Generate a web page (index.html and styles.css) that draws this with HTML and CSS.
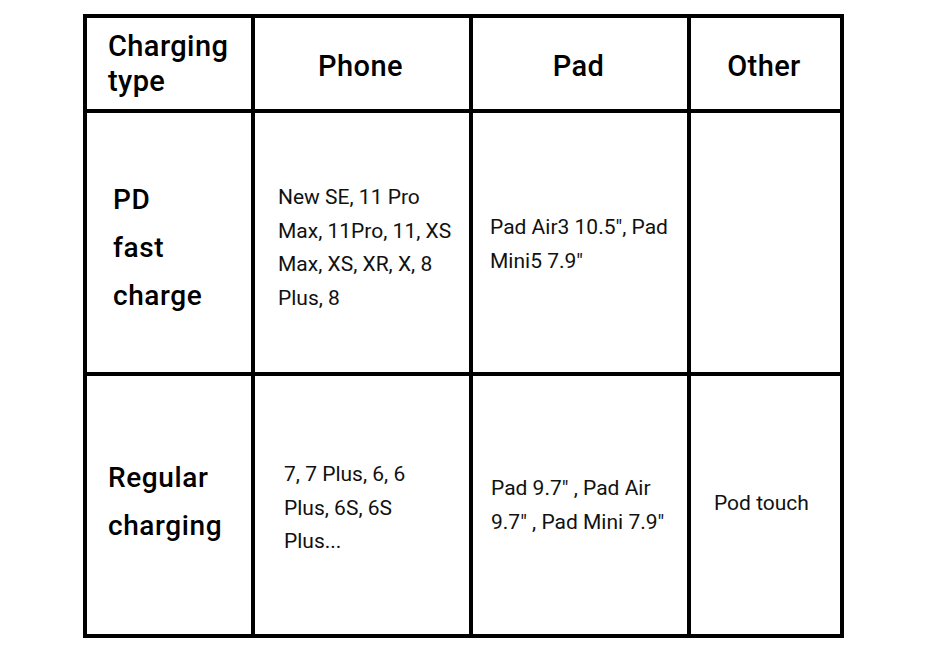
FILE: index.html
```html
<!DOCTYPE html>
<html lang="en">
<head>
<meta charset="utf-8">
<title>Charging type table</title>
<link rel="stylesheet" href="styles.css">
</head>
<body>
<div class="table">
  <div class="cell head head-first"><div class="title">Charging<br>type</div></div>
  <div class="cell head head-center"><div class="title">Phone</div></div>
  <div class="cell head head-center"><div class="title">Pad</div></div>
  <div class="cell head head-center"><div class="title">Other</div></div>

  <div class="cell r2c1"><div class="label">PD<br>fast<br>charge</div></div>
  <div class="cell r2c2"><div class="text">New SE, 11 Pro<br>Max, 11Pro, 11, XS<br>Max, XS, XR, X, 8<br>Plus, 8</div></div>
  <div class="cell r2c3"><div class="text">Pad Air3 10.5", Pad<br>Mini5 7.9"</div></div>
  <div class="cell r2c4"></div>

  <div class="cell r3c1"><div class="label">Regular<br>charging</div></div>
  <div class="cell r3c2"><div class="text">7, 7 Plus, 6, 6<br>Plus, 6S, 6S<br>Plus...</div></div>
  <div class="cell r3c3"><div class="text">Pad 9.7" , Pad Air<br>9.7" , Pad Mini 7.9"</div></div>
  <div class="cell r3c4"><div class="text">Pod touch</div></div>
</div>
</body>
</html>
```

FILE: styles.css
```css
html, body {
  margin: 0;
  padding: 0;
  background: #ffffff;
}

body {
  padding: 14px 0 0 83px;
  font-family: Roboto, "Liberation Sans", sans-serif;
  color: #0d0d0d;
}

.table {
  display: grid;
  grid-template-columns: 164px 214px 214px 149px;
  grid-template-rows: 91px 259px 258px;
  gap: 4px;
  padding: 4px;
  width: 753px;
  background: #000000;
}

.cell {
  background: #ffffff;
  display: flex;
  flex-direction: column;
  align-items: flex-start;
  justify-content: flex-start;
}

.head {
  justify-content: center;
}

.head-center {
  align-items: center;
}

.head-first {
  padding-left: 21px;
}

.title {
  font-size: 29px;
  font-weight: 500;
  line-height: 35px;
  letter-spacing: 0.4px;
  color: #000;
}

.head-first .title {
  margin-top: 1px;
}

.head-center .title {
  margin-top: 6px;
  margin-right: 3px;
}

.label {
  font-size: 28px;
  font-weight: 500;
  line-height: 48px;
  letter-spacing: 0.6px;
  color: #000;
}

.text {
  font-size: 21px;
  font-weight: 400;
  line-height: 33.5px;
  color: #111;
}

.r2c1 { padding: 63px 0 0 26px; }
.r2c2 { padding: 68px 0 0 23px; }
.r2c3 { padding: 98px 0 0 17px; }
.r3c1 { padding: 78px 0 0 21px; }
.r3c2 { padding: 82px 0 0 29px; }
.r3c3 { padding: 96px 0 0 18px; }
.r3c4 { padding: 111px 0 0 23px; }
```
